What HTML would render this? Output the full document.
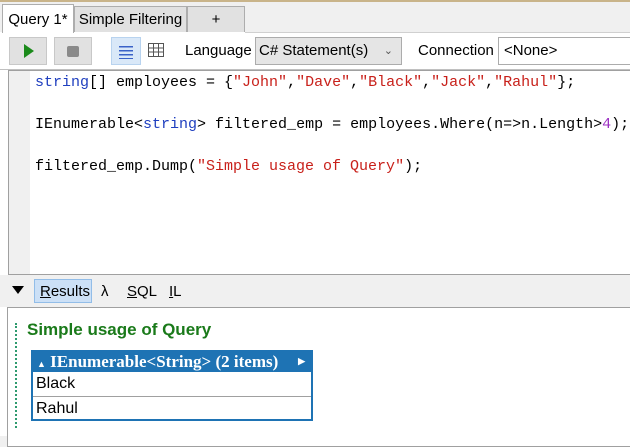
<!DOCTYPE html>
<html><head><style>
body{margin:0;width:630px;height:436px;background:#f0f0f0;font-family:"Liberation Sans",sans-serif;position:relative;overflow:hidden}
.a{position:absolute}
.tab{position:absolute;top:6px;height:26px;border:1px solid #adadad;border-bottom:none;background:#e1e1e1;font-size:15px;line-height:26px;text-align:center;box-sizing:border-box}
.btn{position:absolute;top:37px;width:38px;height:28px;background:#e1e1e1;border:1px solid #c8c8c8;box-sizing:border-box}
.code{position:absolute;left:35px;font-family:"Liberation Mono",monospace;font-size:15px;color:#000;white-space:pre}
.s{color:#c8201a}.k{color:#1f3fbf}.n{color:#9b2fc2}
</style></head><body>
<div class="a" style="left:0;top:0;width:630px;height:2px;background:#c9b48a"></div>
<div class="a" style="left:0;top:32px;width:630px;height:404px;background:#fff"></div>
<div class="tab" style="left:2px;top:4px;height:29px;width:72px;background:#fff;line-height:30px">Query 1*</div>
<div class="tab" style="left:74px;width:113px">Simple Filtering</div>
<div class="tab" style="left:187px;width:58px">+</div>
<div class="a" style="left:245px;top:32px;width:385px;height:1px;background:#d0d0d0"></div>
<div class="btn" style="left:9px"><svg width="38" height="28" style="position:absolute;left:-1px;top:-1px"><path d="M15 7 L25 14 L15 21Z" fill="#1a8a1a"/></svg></div>
<div class="btn" style="left:54px"><div class="a" style="left:12px;top:8px;width:12px;height:11px;background:#8a8a8a;border-radius:2px"></div></div>
<div class="a" style="left:111px;top:37px;width:30px;height:28px;background:#d9e8f8;border:1px solid #b8d3ef;box-sizing:border-box">
<svg width="30" height="28" style="position:absolute;left:-1px;top:-1px"><g fill="#3a62c8"><rect x="8" y="9" width="14" height="1.5"/><rect x="8" y="13" width="14" height="1.5"/><rect x="8" y="17" width="14" height="1.5"/><rect x="8" y="21" width="14" height="1" /></g></svg></div>
<svg class="a" style="left:148px;top:43px" width="17" height="15"><g fill="none" stroke="#555" stroke-width="1"><rect x="0.5" y="0.5" width="15" height="13"/><path d="M0 5H16M0 9H16M5.5 0V14M10.5 0V14"/></g></svg>
<div class="a" style="left:185px;top:42px;font-size:15px">Language</div>
<div class="a" style="left:255px;top:37px;width:147px;height:28px;background:#e5e5e5;border:1px solid #acacac;box-sizing:border-box;font-size:15px;line-height:26px;padding-left:3px">C# Statement(s)<span style="position:absolute;right:8px;font-size:11px;color:#555">&#8964;</span></div>
<div class="a" style="left:418px;top:42px;font-size:15px">Connection</div>
<div class="a" style="left:498px;top:37px;width:140px;height:28px;background:#fff;border:1px solid #acacac;box-sizing:border-box;font-size:15px;line-height:26px;padding-left:5px">&lt;None&gt;</div>
<div class="a" style="left:0;top:69px;width:630px;height:1px;background:#c0c0c0"></div>
<div class="a" style="left:8px;top:70px;width:640px;height:205px;border:1px solid #a0a0a0;border-right:none;background:#fff;box-sizing:border-box"></div>
<div class="a" style="left:9px;top:71px;width:21px;height:203px;background:#f0f0f0"></div>
<div class="code" style="top:74px"><span class="k">string</span>[] employees = {<span class="s">"John"</span>,<span class="s">"Dave"</span>,<span class="s">"Black"</span>,<span class="s">"Jack"</span>,<span class="s">"Rahul"</span>};</div>
<div class="code" style="top:116px">IEnumerable&lt;<span class="k">string</span>&gt; filtered_emp = employees.Where(n=&gt;n.Length&gt;<span class="n">4</span>);</div>
<div class="code" style="top:158px">filtered_emp.Dump(<span class="s">"Simple usage of Query"</span>);</div>
<div class="a" style="left:0;top:275px;width:630px;height:32px;background:#f0f0f0"></div>
<svg class="a" style="left:12px;top:286px" width="12" height="9"><path d="M0 0H12L6 8Z" fill="#000"/></svg>
<div class="a" style="left:34px;top:279px;width:58px;height:24px;background:#cce0f6;border:1px solid #92bde8;box-sizing:border-box"></div>
<div class="a" style="left:40px;top:283px;font-size:15px"><u>R</u>esults</div>
<div class="a" style="left:101px;top:283px;font-size:15px">λ</div>
<div class="a" style="left:127px;top:283px;font-size:15px"><u>S</u>QL</div>
<div class="a" style="left:169px;top:283px;font-size:15px"><u>I</u>L</div>
<div class="a" style="left:7px;top:307px;width:630px;height:140px;border:1px solid #a0a0a0;background:#fff;box-sizing:border-box"></div>
<div class="a" style="left:15px;top:323px;width:2px;height:105px;border-left:2px dotted #2e9a6e"></div>
<div class="a" style="left:27px;top:320px;font-size:17px;font-weight:bold;color:#1a7a1a">Simple usage of Query</div>
<div class="a" style="left:31px;top:350px;width:282px;height:71px;border:2px solid #1e73b4;box-sizing:border-box;background:#fff">
<div style="height:20px;background:#1e73b4;color:#fff;font-family:'Liberation Serif',serif;font-weight:bold;font-size:17px;line-height:19px;padding-left:4px;position:relative;white-space:nowrap"><span style="font-size:9px">&#9650;</span> IEnumerable&lt;String&gt; (2 items)<span style="position:absolute;right:6px;font-size:9px">&#9654;</span></div>
<div style="height:24px;border-bottom:1px solid #a0a0a0;font-size:16px;line-height:24px;padding-left:3px">Black</div>
<div style="font-size:16px;line-height:23px;padding-left:3px">Rahul</div>
</div>
</body></html>
